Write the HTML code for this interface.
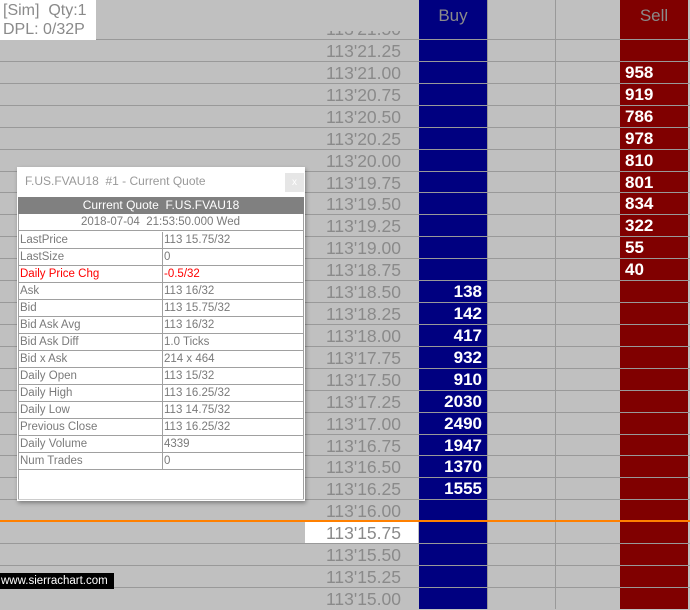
<!DOCTYPE html>
<html><head><meta charset="utf-8">
<style>
*{margin:0;padding:0;box-sizing:border-box}
body{width:690px;height:609px;overflow:hidden;background:#c0c0c0;position:relative;font-family:"Liberation Sans",Arial,sans-serif}
.a{position:absolute}
.ln{position:absolute;left:0;width:690px;height:1px;background:#999}
.pr{position:absolute;width:401px;left:0;text-align:right;font-size:17.5px;color:#8a8a8a;line-height:22px;height:22px;padding-top:1px}
.bv{position:absolute;left:419px;width:63px;text-align:right;font-size:17px;font-weight:bold;color:#fff;line-height:22px;height:22px;padding-top:1px}
.sv{position:absolute;left:625px;width:60px;font-size:17px;font-weight:bold;color:#fff;line-height:22px;height:22px;padding-top:1px}
.win{position:absolute;left:17px;top:167px;width:288px;height:334px;background:#fff;box-shadow:1px 2px 4px rgba(0,0,0,.35);font-family:"Liberation Sans",sans-serif}
.tr{position:absolute;left:1px;width:285px;height:17px;border-bottom:1px solid #a0a0a0;font-size:11.5px;color:#7a7a7a;line-height:16px}
.tr span{position:absolute;top:0}
.tr .k{left:2px}
.tr .v{left:144px;border-left:1px solid #a0a0a0;padding-left:1px;height:17px}
</style></head><body>
<div class="a" style="left:419px;top:0;width:68px;height:609px;background:#000080"></div>
<div class="a" style="left:620px;top:0;width:68px;height:609px;background:#800000"></div>
<div class="a" style="left:555px;top:0;width:1px;height:609px;background:#999"></div>
<div class="a" style="left:487px;top:0;width:1px;height:609px;background:#999"></div>
<div class="a" style="left:419px;top:6px;width:68px;text-align:center;font-size:17px;color:#8a8a8a">Buy</div>
<div class="a" style="left:620px;top:6px;width:68px;text-align:center;font-size:17px;color:#8a8a8a">Sell</div>

<div class="ln" style="top:39px"></div>
<div class="ln" style="top:61px"></div>
<div class="ln" style="top:83px"></div>
<div class="ln" style="top:105px"></div>
<div class="ln" style="top:127px"></div>
<div class="ln" style="top:149px"></div>
<div class="ln" style="top:171px"></div>
<div class="ln" style="top:192px"></div>
<div class="ln" style="top:214px"></div>
<div class="ln" style="top:236px"></div>
<div class="ln" style="top:258px"></div>
<div class="ln" style="top:280px"></div>
<div class="ln" style="top:302px"></div>
<div class="ln" style="top:324px"></div>
<div class="ln" style="top:346px"></div>
<div class="ln" style="top:368px"></div>
<div class="ln" style="top:390px"></div>
<div class="ln" style="top:412px"></div>
<div class="ln" style="top:434px"></div>
<div class="ln" style="top:455px"></div>
<div class="ln" style="top:477px"></div>
<div class="ln" style="top:499px"></div>
<div class="ln" style="top:543px"></div>
<div class="ln" style="top:565px"></div>
<div class="ln" style="top:587px"></div>

<div class="a" style="left:305px;top:522px;width:113px;height:21px;background:#fff"></div>
<div class="a" style="left:0;top:520px;width:690px;height:2px;background:#ff8000"></div>

<div class="a" style="left:0;top:31px;width:418px;height:8px;overflow:hidden"><div class="pr" style="top:-14px">113'21.50</div></div>
<div class="pr" style="top:39px">113'21.25</div>
<div class="pr" style="top:61px">113'21.00</div>
<div class="pr" style="top:83px">113'20.75</div>
<div class="pr" style="top:105px">113'20.50</div>
<div class="pr" style="top:127px">113'20.25</div>
<div class="pr" style="top:149px">113'20.00</div>
<div class="pr" style="top:171px">113'19.75</div>
<div class="pr" style="top:192px">113'19.50</div>
<div class="pr" style="top:214px">113'19.25</div>
<div class="pr" style="top:236px">113'19.00</div>
<div class="pr" style="top:258px">113'18.75</div>
<div class="pr" style="top:280px">113'18.50</div>
<div class="pr" style="top:302px">113'18.25</div>
<div class="pr" style="top:324px">113'18.00</div>
<div class="pr" style="top:346px">113'17.75</div>
<div class="pr" style="top:368px">113'17.50</div>
<div class="pr" style="top:390px">113'17.25</div>
<div class="pr" style="top:412px">113'17.00</div>
<div class="pr" style="top:434px">113'16.75</div>
<div class="pr" style="top:455px">113'16.50</div>
<div class="pr" style="top:477px">113'16.25</div>
<div class="pr" style="top:499px">113'16.00</div>
<div class="pr" style="top:521px">113'15.75</div>
<div class="pr" style="top:543px">113'15.50</div>
<div class="pr" style="top:565px">113'15.25</div>
<div class="pr" style="top:587px">113'15.00</div>

<div class="sv" style="top:61px">958</div>
<div class="sv" style="top:83px">919</div>
<div class="sv" style="top:105px">786</div>
<div class="sv" style="top:127px">978</div>
<div class="sv" style="top:149px">810</div>
<div class="sv" style="top:171px">801</div>
<div class="sv" style="top:192px">834</div>
<div class="sv" style="top:214px">322</div>
<div class="sv" style="top:236px">55</div>
<div class="sv" style="top:258px">40</div>

<div class="bv" style="top:280px">138</div>
<div class="bv" style="top:302px">142</div>
<div class="bv" style="top:324px">417</div>
<div class="bv" style="top:346px">932</div>
<div class="bv" style="top:368px">910</div>
<div class="bv" style="top:390px">2030</div>
<div class="bv" style="top:412px">2490</div>
<div class="bv" style="top:434px">1947</div>
<div class="bv" style="top:455px">1370</div>
<div class="bv" style="top:477px">1555</div>

<div class="a" style="left:0;top:0;width:96px;height:40px;background:#fff;color:#8a8a8a;font-size:16px;line-height:19px;padding:1px 0 0 3px;white-space:pre">[Sim]  Qty:1
DPL: 0/32P</div>

<div class="win">
  <div class="a" style="left:8px;top:7px;font-size:12px;color:#999;white-space:pre">F.US.FVAU18  #1 - Current Quote</div>
  <div class="a" style="left:268px;top:6px;width:19px;height:19px;background:#e6e6e6;color:#fff;font-size:10px;text-align:center;line-height:19px">x</div>
  <div class="a" style="left:1px;top:30px;width:286px;height:17px;background:#808080;color:#fff;font-size:12px;text-align:center;line-height:17px;white-space:pre">Current Quote  F.US.FVAU18</div>
  <div class="tr" style="top:47px;text-align:center;white-space:pre">2018-07-04  21:53:50.000 Wed</div>
  <div class="tr" style="top:65px"><span class="k">LastPrice</span><span class="v">113 15.75/32</span></div>
  <div class="tr" style="top:82px"><span class="k">LastSize</span><span class="v">0</span></div>
  <div class="tr" style="top:99px;color:#f00"><span class="k">Daily Price Chg</span><span class="v">-0.5/32</span></div>
  <div class="tr" style="top:116px"><span class="k">Ask</span><span class="v">113 16/32</span></div>
  <div class="tr" style="top:133px"><span class="k">Bid</span><span class="v">113 15.75/32</span></div>
  <div class="tr" style="top:150px"><span class="k">Bid Ask Avg</span><span class="v">113 16/32</span></div>
  <div class="tr" style="top:167px"><span class="k">Bid Ask Diff</span><span class="v">1.0 Ticks</span></div>
  <div class="tr" style="top:184px"><span class="k">Bid x Ask</span><span class="v">214 x 464</span></div>
  <div class="tr" style="top:201px"><span class="k">Daily Open</span><span class="v">113 15/32</span></div>
  <div class="tr" style="top:218px"><span class="k">Daily High</span><span class="v">113 16.25/32</span></div>
  <div class="tr" style="top:235px"><span class="k">Daily Low</span><span class="v">113 14.75/32</span></div>
  <div class="tr" style="top:252px"><span class="k">Previous Close</span><span class="v">113 16.25/32</span></div>
  <div class="tr" style="top:269px"><span class="k">Daily Volume</span><span class="v">4339</span></div>
  <div class="tr" style="top:286px"><span class="k">Num Trades</span><span class="v">0</span></div>
  <div class="a" style="left:1px;top:47px;width:1px;height:286px;background:#a0a0a0"></div>
  <div class="a" style="left:286px;top:47px;width:1px;height:286px;background:#a0a0a0"></div>
  <div class="a" style="left:1px;top:332px;width:286px;height:1px;background:#ccc"></div>
</div>

<div class="a" style="left:0;top:573px;width:114px;height:16px;background:#000;color:#fff;font-family:'Liberation Sans',sans-serif;font-size:11.5px;line-height:16px;padding-left:1px">www.sierrachart.com</div>
</body></html>
